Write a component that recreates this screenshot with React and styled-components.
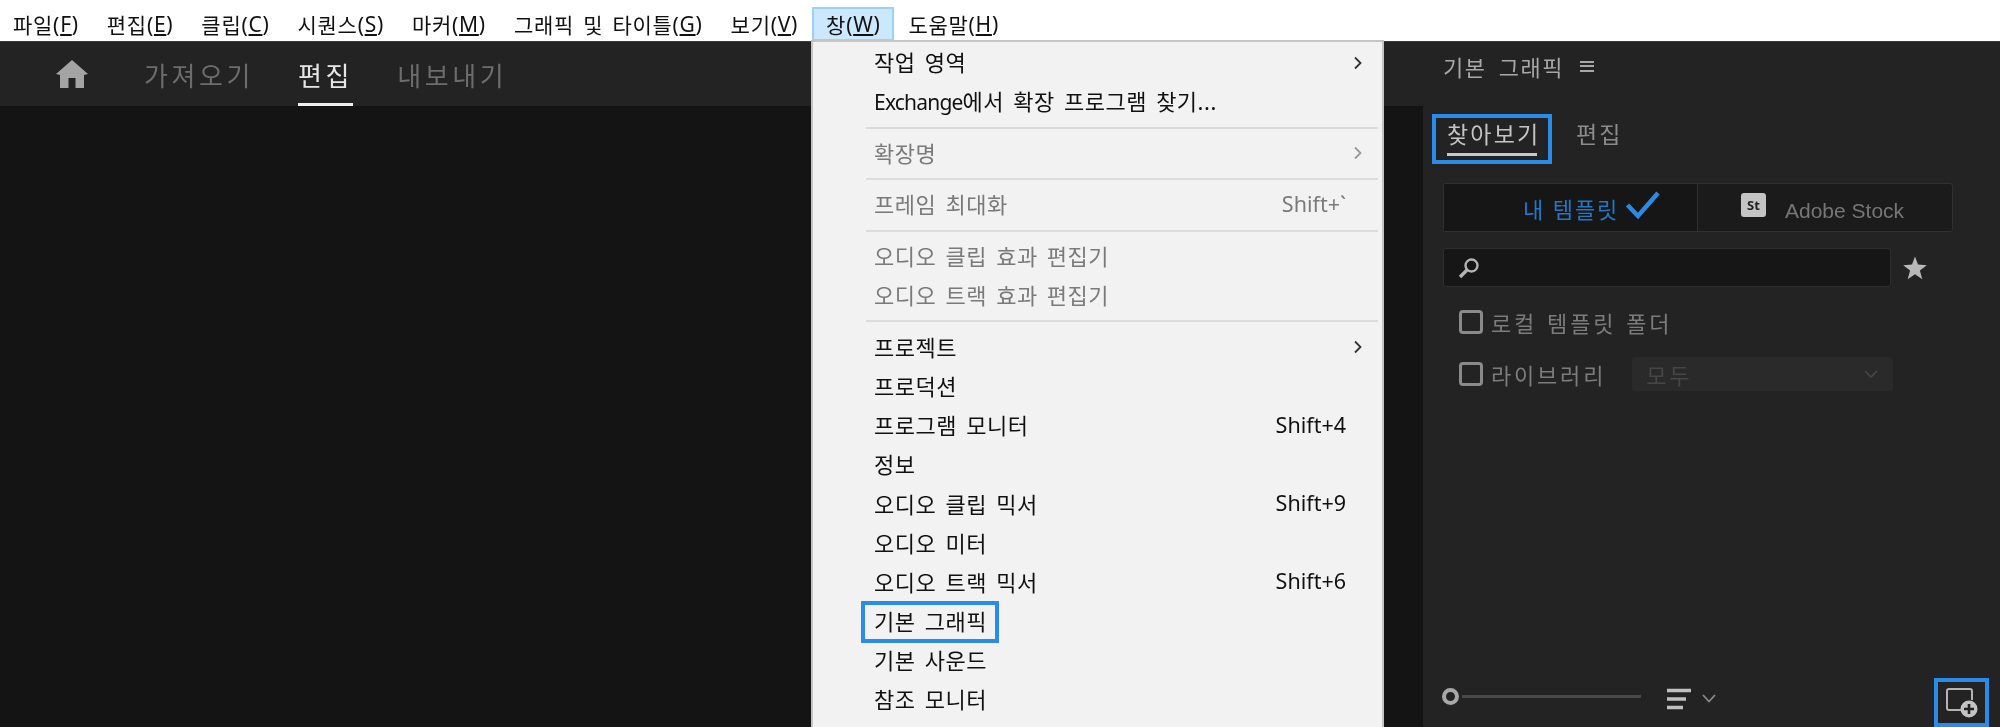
import React from 'react';
import styled, { createGlobalStyle } from 'styled-components';

const GlobalStyle = createGlobalStyle`
  html, body {
    margin: 0;
    padding: 0;
    background: #141414;
  }
  body {
    font-family: "Noto Sans", "Noto Sans CJK KR", sans-serif;
    overflow: hidden;
  }
`;

const BLUE = '#2a8ce8';

const Page = styled.div`
  position: relative;
  width: 2000px;
  height: 727px;
  overflow: hidden;
  display: flex;
  flex-direction: column;
  filter: blur(0.4px);
`;

const MenuBar = styled.div`
  height: 39px;
  padding-bottom: 2px;
  background: #fff;
  border-bottom: 1px solid #3a3a3a;
  box-sizing: content-box;
  display: flex;
  align-items: flex-end;
  flex-shrink: 0;
`;

const MenuItem = styled.div`
  height: 34px;
  margin-bottom: -2px;
  padding: 0 12px;
  box-sizing: border-box;
  display: flex;
  align-items: center;
  font-size: 21px;
  letter-spacing: 0.72px;
  word-spacing: 3px;
  color: #111;
  white-space: nowrap;
  background: ${(p) => (p.$open ? '#cce8ff' : 'transparent')};
  border: 2px solid ${(p) => (p.$open ? '#99d1ff' : 'transparent')};
  &:first-child {
    margin-left: -1px;
  }
  u {
    text-underline-offset: 2px;
  }
`;

const Body = styled.div`
  flex: 1;
  display: flex;
  min-height: 0;
`;

const Workspace = styled.div`
  flex: 1;
  display: flex;
  flex-direction: column;
  background: #141414;
`;

const WorkspaceTabs = styled.div`
  height: 64px;
  flex-shrink: 0;
  background: #232323;
  display: flex;
  align-items: stretch;
  padding-left: 56px;
`;

const HomeButton = styled.div`
  width: 32px;
  margin-right: 56px;
  display: flex;
  align-items: center;
  svg {
    display: block;
  }
`;

const WorkspaceTab = styled.div`
  margin-right: ${(p) => p.$gap}px;
  display: flex;
  align-items: center;
  font-size: 26px;
  letter-spacing: 3.6px;
  color: ${(p) => (p.$active ? '#e6e6e6' : '#6c6c6c')};
  border-bottom: 3px solid ${(p) => (p.$active ? '#f0f0f0' : 'transparent')};
  box-sizing: border-box;
  padding-top: 5px;
`;

const SidePanel = styled.aside`
  width: 577px;
  flex-shrink: 0;
  background: #232323;
  display: flex;
  flex-direction: column;
  box-sizing: border-box;
  padding-left: 20px;
`;

const PanelTitle = styled.div`
  height: 48px;
  display: flex;
  align-items: center;
  font-size: 22px;
  letter-spacing: 1.5px;
  word-spacing: 5px;
  color: #a8a8a8;
  gap: 16px;
`;

const Hamburger = styled.span`
  width: 14px;
  height: 11px;
  border-top: 2px solid #a8a8a8;
  border-bottom: 2px solid #a8a8a8;
  position: relative;
  box-sizing: border-box;
  &::after {
    content: '';
    position: absolute;
    left: 0;
    right: 0;
    top: 2.5px;
    height: 2px;
    background: #a8a8a8;
  }
`;

const PanelTabs = styled.div`
  margin: 24px 0 19px -11px;
  height: 50px;
  display: flex;
  align-items: stretch;
`;

const HighlightBox = styled.div`
  border: 4px solid ${BLUE};
  box-sizing: border-box;
`;

const BrowseTab = styled(HighlightBox)`
  width: 120px;
  padding: 0 11px;
  color: #c4c4c4;
  font-size: 23px;
  letter-spacing: 2.2px;
  display: flex;
  flex-direction: column;
  align-items: stretch;
  line-height: 32px;
  span {
    display: block;
    border-bottom: 3px solid #c8c8c8;
    height: 35px;
    white-space: nowrap;
  }
`;

const EditTab = styled.div`
  margin-left: 24px;
  font-size: 23px;
  letter-spacing: 2.2px;
  color: #8c8c8c;
  line-height: 40px;
`;

const SourceToggle = styled.div`
  width: 510px;
  height: 49px;
  display: grid;
  grid-template-columns: 254px 1fr;
  box-sizing: border-box;
  border: 1px solid #303030;
  border-radius: 3px;
  background: #1b1b1b;
`;

const SourceButton = styled.div`
  display: flex;
  align-items: center;
  padding-left: ${(p) => p.$inset}px;
  background: ${(p) => (p.$active ? '#161616' : 'transparent')};
  border-right: ${(p) => (p.$active ? '1px solid #303030' : '0')};
  color: ${(p) => (p.$active ? '#2178c8' : '#767676')};
  font-size: 22px;
  letter-spacing: 1.9px;
  gap: ${(p) => p.$gap}px;
  svg {
    display: block;
    margin-top: -5px;
  }
`;

const StockBadge = styled.span`
  width: 25px;
  height: 24px;
  border-radius: 3px;
  background: #c4c4c4;
  color: #222;
  font-size: 13px;
  letter-spacing: 0;
  font-weight: 700;
  display: flex;
  align-items: center;
  justify-content: center;
  margin-top: -6px;
`;

const StockLabel = styled.span`
  font-family: "Liberation Sans", sans-serif;
  font-size: 21px;
  letter-spacing: 0;
  padding-top: 7px;
`;

const SearchRow = styled.div`
  margin-top: 16px;
  display: flex;
  align-items: center;
`;

const SearchField = styled.div`
  width: 448px;
  height: 39px;
  box-sizing: border-box;
  background: #161616;
  border: 1px solid #2e2e2e;
  border-radius: 3px;
  padding-left: 14px;
  display: flex;
  align-items: center;
`;

const StarButton = styled.div`
  margin-left: 12px;
  display: flex;
`;

const FilterRow = styled.div`
  margin-top: ${(p) => p.$top}px;
  margin-left: 16px;
  height: 24px;
  display: flex;
  align-items: center;
  color: #7c7c7c;
  font-size: 22px;
  letter-spacing: 2.8px;
  word-spacing: 1.5px;
`;

const CheckBox = styled.span`
  width: 24px;
  height: 24px;
  box-sizing: border-box;
  border: 3px solid #8a8a8a;
  border-radius: 4px;
  margin-right: 8px;
  flex-shrink: 0;
`;

const Select = styled.div`
  width: 261px;
  height: 34px;
  margin-left: 26px;
  box-sizing: border-box;
  background: #2a2a2a;
  border-radius: 3px;
  padding: 0 14px;
  display: flex;
  align-items: center;
  justify-content: space-between;
  color: #464646;
`;

const PanelFooter = styled.div`
  margin-top: auto;
  height: 49px;
  display: flex;
  align-items: center;
`;

const ZoomSlider = styled.div`
  width: 199px;
  margin-left: -1px;
  display: flex;
  align-items: center;
  margin-top: -12px;
`;

const SliderThumb = styled.span`
  width: 17px;
  height: 17px;
  box-sizing: border-box;
  border: 4px solid #a8a8a8;
  border-radius: 50%;
  flex-shrink: 0;
`;

const SliderTrack = styled.span`
  flex: 1;
  height: 3px;
  margin-left: 3px;
  background: #4a4a4a;
`;

const SortButton = styled.div`
  margin-left: 26px;
  margin-top: -8px;
  display: flex;
  align-items: center;
  gap: 11px;
  svg {
    display: block;
  }
`;

const NewItemButton = styled(HighlightBox)`
  margin-left: auto;
  margin-right: 11px;
  width: 55px;
  height: 49px;
  display: flex;
  align-items: center;
  justify-content: center;
  svg {
    display: block;
  }
`;

const DropMenu = styled.div`
  position: absolute;
  left: 811px;
  top: 40px;
  width: 573px;
  height: 700px;
  box-sizing: border-box;
  background: #f2f2f2;
  border: 2px solid #c4c4c4;
  border-bottom: 0;
  padding-top: 1px;
  padding-right: 4px;
`;

const MenuRow = styled.div`
  height: 39.2px;
  box-sizing: border-box;
  padding: 0 0 3px 61px;
  display: flex;
  align-items: center;
  font-size: 22px;
  letter-spacing: 0.5px;
  word-spacing: 3px;
  color: ${(p) => (p.$disabled ? '#7a7a7a' : '#111')};
  white-space: nowrap;
`;

const MenuLabel = styled.span`
  flex: 1;
`;

const LatinWord = styled.span`
  font-size: 21px;
  letter-spacing: -0.8px;
`;

const HighlightLabel = styled(HighlightBox)`
  position: absolute;
  left: 48px;
  margin-top: 3px;
  width: 138px;
  height: 42px;
  pointer-events: none;
`;

const Shortcut = styled.span`
  font-size: 21.5px;
  letter-spacing: 0;
  margin-right: 32px;
`;

const ArrowSlot = styled.span`
  position: absolute;
  right: 19px;
  margin-top: 3px;
  display: flex;
  svg {
    display: block;
  }
`;

const Separator = styled.div`
  height: 12.4px;
  margin-left: 53px;
  display: flex;
  align-items: center;
  &::after {
    content: '';
    flex: 1;
    height: 2px;
    background: #dcdcdc;
  }
`;

const topMenus = [
  ['파일', 'F'],
  ['편집', 'E'],
  ['클립', 'C'],
  ['시퀀스', 'S'],
  ['마커', 'M'],
  ['그래픽 및 타이틀', 'G'],
  ['보기', 'V'],
  ['창', 'W', true],
  ['도움말', 'H'],
];

const menuGroups = [
  [
    { label: '작업 영역', arrow: true },
    {
      label: (
        <>
          <LatinWord>Exchange</LatinWord>에서 확장 프로그램 찾기...
        </>
      ),
    },
  ],
  [{ label: '확장명', arrow: true, disabled: true }],
  [{ label: '프레임 최대화', key: 'Shift+`', disabled: true }],
  [
    { label: '오디오 클립 효과 편집기', disabled: true },
    { label: '오디오 트랙 효과 편집기', disabled: true },
  ],
  [
    { label: '프로젝트', arrow: true },
    { label: '프로덕션' },
    { label: '프로그램 모니터', key: 'Shift+4' },
    { label: '정보' },
    { label: '오디오 클립 믹서', key: 'Shift+9' },
    { label: '오디오 미터' },
    { label: '오디오 트랙 믹서', key: 'Shift+6' },
    { label: '기본 그래픽', marked: true },
    { label: '기본 사운드' },
    { label: '참조 모니터' },
  ],
];

function Chevron({ color }) {
  return (
    <svg width="10" height="16" viewBox="0 0 10 16" fill="none">
      <path d="M2 2.5 L7.5 8 L2 13.5" stroke={color} strokeWidth="1.8" />
    </svg>
  );
}

function WindowMenu() {
  return (
    <DropMenu>
      {menuGroups.map((group, i) => (
        <React.Fragment key={i}>
          {i > 0 && <Separator />}
          {group.map((item, j) => (
            <MenuRow key={j} $disabled={item.disabled}>
              {item.marked && <HighlightLabel />}
              <MenuLabel>{item.label}</MenuLabel>
              {item.key && <Shortcut>{item.key}</Shortcut>}
              {item.arrow && (
                <ArrowSlot>
                  <Chevron color={item.disabled ? '#9a9a9a' : '#333'} />
                </ArrowSlot>
              )}
            </MenuRow>
          ))}
        </React.Fragment>
      ))}
    </DropMenu>
  );
}

export default function App() {
  return (
    <Page>
      <GlobalStyle />
      <MenuBar>
        {topMenus.map(([name, key, open]) => (
          <MenuItem key={key} $open={open}>
            {name}(<u>{key}</u>)
          </MenuItem>
        ))}
      </MenuBar>
      <Body>
        <Workspace>
          <WorkspaceTabs>
            <HomeButton>
              <svg width="32" height="28" viewBox="0 0 32 28">
                <path
                  d="M16 0 L32 14 L28 15 L28 28 L19.5 28 L19.5 18 L12.5 18 L12.5 28 L4 28 L4 15 L0 14 Z"
                  fill="#a4a4a4"
                />
              </svg>
            </HomeButton>
            <WorkspaceTab $gap={44}>가져오기</WorkspaceTab>
            <WorkspaceTab $gap={44} $active>
              편집
            </WorkspaceTab>
            <WorkspaceTab $gap={0}>내보내기</WorkspaceTab>
          </WorkspaceTabs>
        </Workspace>
        <SidePanel>
          <PanelTitle>
            기본 그래픽
            <Hamburger />
          </PanelTitle>
          <PanelTabs>
            <BrowseTab>
              <span>찾아보기</span>
            </BrowseTab>
            <EditTab>편집</EditTab>
          </PanelTabs>
          <SourceToggle>
            <SourceButton $active $inset={79} $gap={6}>
              내 템플릿
              <svg width="36" height="30" viewBox="0 0 36 30" fill="none">
                <path d="M2.5 15 L13 26 L33 3" stroke="#2c8ae0" strokeWidth="4.5" />
              </svg>
            </SourceButton>
            <SourceButton $inset={43} $gap={19}>
              <StockBadge>St</StockBadge>
              <StockLabel>Adobe Stock</StockLabel>
            </SourceButton>
          </SourceToggle>
          <SearchRow>
            <SearchField>
              <svg width="22" height="22" viewBox="0 0 22 22" fill="none">
                <circle cx="13.5" cy="8.5" r="6" stroke="#b4b4b4" strokeWidth="2.4" />
                <path d="M9 13 L2 20" stroke="#b4b4b4" strokeWidth="3.4" />
              </svg>
            </SearchField>
            <StarButton>
              <svg width="24" height="24" viewBox="0 0 24 24">
                <path
                  d="M12 0.5 L15 8.6 L23.8 9.2 L16.9 14.6 L19.3 23.2 L12 18.3 L4.7 23.2 L7.1 14.6 L0.2 9.2 L9 8.6 Z"
                  fill="#b8b8b8"
                />
              </svg>
            </StarButton>
          </SearchRow>
          <FilterRow $top={23}>
            <CheckBox />
            로컬 템플릿 폴더
          </FilterRow>
          <FilterRow $top={28}>
            <CheckBox />
            라이브러리
            <Select>
              모두
              <svg width="16" height="10" viewBox="0 0 16 10" fill="none">
                <path d="M2 2 L8 8 L14 2" stroke="#464646" strokeWidth="1.6" />
              </svg>
            </Select>
          </FilterRow>
          <PanelFooter>
            <ZoomSlider>
              <SliderThumb />
              <SliderTrack />
            </ZoomSlider>
            <SortButton>
              <svg width="24" height="22" viewBox="0 0 24 22" fill="none">
                <path d="M0 2.5 H24 M0 11 H19 M0 19.5 H16" stroke="#c0c0c0" strokeWidth="3.4" />
              </svg>
              <svg width="14" height="9" viewBox="0 0 14 9" fill="none">
                <path d="M1 1 L7 7.5 L13 1" stroke="#8a8a8a" strokeWidth="1.8" />
              </svg>
            </SortButton>
            <NewItemButton>
              <svg width="32" height="30" viewBox="0 0 32 30" fill="none">
                <path d="M15 22 H3 a2 2 0 0 1 -2 -2 V3 a2 2 0 0 1 2 -2 H24 a2 2 0 0 1 2 2 V12" stroke="#b4b4b4" strokeWidth="2" />
                <circle cx="23" cy="21" r="8.5" fill="#c4c4c4" />
                <path d="M23 16 V26 M18 21 H28" stroke="#232323" strokeWidth="2.6" />
              </svg>
            </NewItemButton>
          </PanelFooter>
        </SidePanel>
      </Body>
      <WindowMenu />
    </Page>
  );
}
